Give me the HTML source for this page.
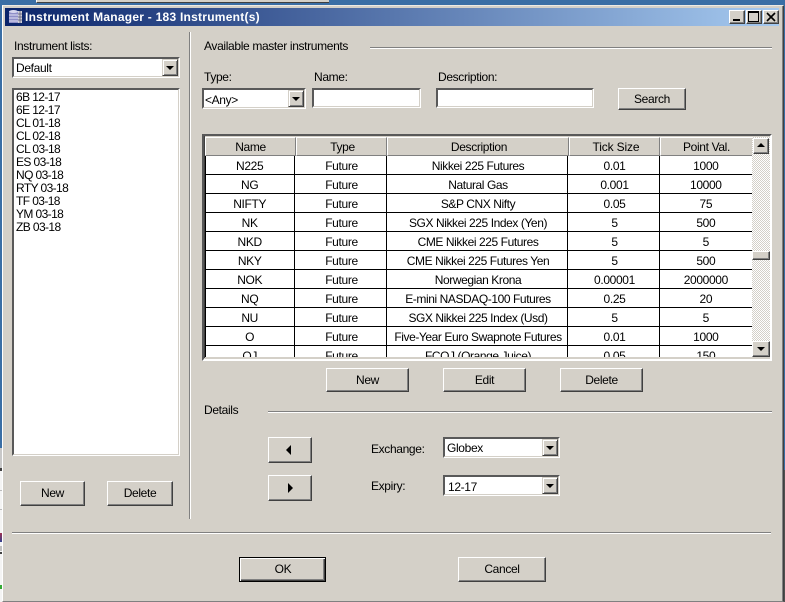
<!DOCTYPE html>
<html><head><meta charset="utf-8"><style>
html,body{margin:0;padding:0}
body{width:785px;height:602px;overflow:hidden;position:relative;background:#3a6ea5;font:12px "Liberation Sans",sans-serif;color:#000;letter-spacing:-.35px}
div{position:absolute;box-sizing:border-box}
.t{white-space:nowrap;line-height:14px;height:14px}
.b{border:1px solid;border-color:#fff #404040 #404040 #fff;box-shadow:inset -1px -1px #808080;background:#d4d0c8;text-align:center}
.f{border:2px solid;border-color:#595959 #fff #fff #595959;background:#fff}
.f:after{content:"";position:absolute;left:-1px;top:-1px;right:-1px;bottom:-1px;border:1px solid;border-color:transparent #d4d0c8 #d4d0c8 transparent}
.d{position:absolute;top:0;right:0;bottom:0;width:16px;border:1px solid;border-color:#d4d0c8 #404040 #404040 #d4d0c8;box-shadow:inset 1px 1px #fff,inset -1px -1px #808080;background:#d4d0c8;z-index:2}
.d:after{content:"";position:absolute;left:3px;top:6px;border:4px solid transparent;border-top:4px solid #000;border-bottom:0}
.hl{height:2px;background:linear-gradient(#808080 50%,#fff 50%)}
.r{left:0;width:547px;height:19px;border-bottom:1px solid #000;display:flex;line-height:20px;text-align:center;background:#fff}
.r span{display:block;height:18px;white-space:nowrap;overflow:hidden}
.r span:nth-child(1){width:90px;border-right:1px solid #000}
.r span:nth-child(2){width:91px;border-right:1px solid #000;text-indent:2px}
.r span:nth-child(3){width:182px;border-right:1px solid #000;text-indent:2px;letter-spacing:-.42px}
.r span:nth-child(4){width:91px;border-right:1px solid #000;text-indent:2px}
.r span:nth-child(5){width:93px}
.h{top:0;height:19px;background:#d4d0c8;border-top:1px solid #fff;border-left:1px solid #fff;border-right:1px solid #808080;border-bottom:1px solid #808080;text-align:center;line-height:19px}
.sb{width:16px;left:753px;border:1px solid;border-color:#fff #404040 #404040 #fff;box-shadow:inset -1px -1px #808080;background:#d4d0c8}
</style></head><body>
<!-- background bits -->
<div style="left:36px;top:0;width:293px;height:3px;background:#d4d0c8;border-bottom:1px solid #404040;border-left:1px solid #fff"></div>
<div style="left:0;top:448px;width:3px;height:154px;background:#f4f4f4"></div>
<div style="left:0;top:448px;width:3px;height:20px;background:#c8c8c8"></div>
<div style="left:0;top:468px;width:3px;height:3px;background:#404040"></div>
<div style="left:0;top:490px;width:3px;height:1px;background:#bbb"></div>
<div style="left:0;top:509px;width:3px;height:1px;background:#bbb"></div>
<div style="left:0;top:533px;width:3px;height:9px;background:linear-gradient(#a03050,#304090)"></div>
<div style="left:0;top:546px;width:3px;height:5px;background:#c0c0c0"></div>
<div style="left:0;top:552px;width:3px;height:2px;background:#404040"></div>
<div style="left:0;top:585px;width:3px;height:4px;background:#3a3"></div>
<div style="left:783px;top:470px;width:2px;height:132px;background:#505050"></div>
<!-- window -->
<div style="left:2px;top:5px;width:782px;height:597px;background:#d4d0c8;border:1px solid;border-color:#eeebe4 #404040 #808080 #fff;box-shadow:inset -1px 0 #808080"></div>
<!-- title bar -->
<div style="left:5px;top:8px;width:774px;height:18px;background:linear-gradient(90deg,#0a246a,#a6caf0)"></div>
<svg style="position:absolute;left:8px;top:9px" width="15" height="16" viewBox="0 0 15 16"><rect x="1" y="2" width="9" height="12" fill="#8f8fc8"/><ellipse cx="5.5" cy="2.5" rx="4.5" ry="1.5" fill="#d8d8f0"/><path d="M1 6h9M1 9h9M1 12h9" stroke="#e0e0f4"/><rect x="10" y="2" width="4" height="12" fill="#d0d0d8"/><path d="M10 5h4M10 8h4M10 11h4M12 2v12" stroke="#505070" stroke-width=".7"/></svg>
<div class="t" style="left:25px;top:10px;color:#fff;font-weight:bold;font-size:12px;letter-spacing:.25px">Instrument Manager - 183 Instrument(s)</div>
<div class="b" style="left:729px;top:10px;width:16px;height:14px"><div style="left:3px;top:8px;width:7px;height:2px;background:#000"></div></div>
<div class="b" style="left:746px;top:10px;width:16px;height:14px"><div style="left:1px;top:0;width:11px;height:11px;border:1px solid #000;border-top-width:2px"></div></div>
<div class="b" style="left:763px;top:10px;width:16px;height:14px"><svg style="position:absolute;left:2px;top:1px" width="10" height="10" viewBox="0 0 10 10"><path d="M1 1l8 8M9 1l-8 8" stroke="#000" stroke-width="1.6"/></svg></div>
<!-- left panel -->
<div class="t" style="left:14px;top:39px">Instrument lists:</div>
<div class="f" style="left:12px;top:57px;width:168px;height:21px"><div class="t" style="left:2px;top:2px">Default</div><div class="d"></div></div>
<div class="f" style="left:12px;top:88px;width:168px;height:368px">
<div class="t" style="left:2px;top:1px;line-height:13px;height:auto;letter-spacing:-.6px">6B 12-17<br>6E 12-17<br>CL 01-18<br>CL 02-18<br>CL 03-18<br>ES 03-18<br>NQ 03-18<br>RTY 03-18<br>TF 03-18<br>YM 03-18<br>ZB 03-18</div></div>
<div class="b" style="left:20px;top:481px;width:65px;height:25px;line-height:23px">New</div>
<div class="b" style="left:107px;top:481px;width:66px;height:25px;line-height:23px">Delete</div>
<div style="left:189px;top:32px;width:2px;height:487px;background:linear-gradient(90deg,#808080 50%,#fff 50%)"></div>
<!-- right panel -->
<div class="t" style="left:204px;top:39px">Available master instruments</div>
<div class="hl" style="left:370px;top:47px;width:402px"></div>
<div class="t" style="left:204px;top:70px">Type:</div>
<div class="t" style="left:314px;top:70px">Name:</div>
<div class="t" style="left:438px;top:70px">Description:</div>
<div class="f" style="left:202px;top:88px;width:104px;height:21px"><div class="t" style="left:1px;top:3px">&lt;Any&gt;</div><div class="d"></div></div>
<div class="f" style="left:312px;top:88px;width:109px;height:20px"></div>
<div class="f" style="left:436px;top:88px;width:158px;height:20px"></div>
<div class="b" style="left:618px;top:88px;width:68px;height:22px;line-height:20px">Search</div>
<!-- table -->
<div style="left:202px;top:134px;width:570px;height:227px;border:2px solid;border-color:#595959 #fff #fff #595959;background:#d4d0c8"></div>
<div style="left:204px;top:136px;width:1px;height:222px;background:#404040"></div>
<div style="left:205px;top:137px;width:547px;height:220px;overflow:hidden;background:#fff">
<div style="left:0;top:19px;width:1px;height:201px;background:#000;z-index:3"></div>
<div class="h" style="left:0;width:91px">Name</div>
<div class="h" style="left:91px;width:91px;text-indent:2px">Type</div>
<div class="h" style="left:182px;width:182px;text-indent:2px">Description</div>
<div class="h" style="left:364px;width:91px;text-indent:3px;letter-spacing:-.15px">Tick Size</div>
<div class="h" style="left:455px;width:93px">Point Val.</div>
<div class="r" style="top:19px"><span>N225</span><span>Future</span><span>Nikkei 225 Futures</span><span>0.01</span><span>1000</span></div>
<div class="r" style="top:38px"><span>NG</span><span>Future</span><span>Natural Gas</span><span>0.001</span><span>10000</span></div>
<div class="r" style="top:57px"><span>NIFTY</span><span>Future</span><span>S&amp;P CNX Nifty</span><span>0.05</span><span>75</span></div>
<div class="r" style="top:76px"><span>NK</span><span>Future</span><span>SGX Nikkei 225 Index (Yen)</span><span>5</span><span>500</span></div>
<div class="r" style="top:95px"><span>NKD</span><span>Future</span><span>CME Nikkei 225 Futures</span><span>5</span><span>5</span></div>
<div class="r" style="top:114px"><span>NKY</span><span>Future</span><span>CME Nikkei 225 Futures Yen</span><span>5</span><span>500</span></div>
<div class="r" style="top:133px"><span>NOK</span><span>Future</span><span>Norwegian Krona</span><span>0.00001</span><span>2000000</span></div>
<div class="r" style="top:152px"><span>NQ</span><span>Future</span><span>E-mini NASDAQ-100 Futures</span><span>0.25</span><span>20</span></div>
<div class="r" style="top:171px"><span>NU</span><span>Future</span><span>SGX Nikkei 225 Index (Usd)</span><span>5</span><span>5</span></div>
<div class="r" style="top:190px"><span>O</span><span>Future</span><span>Five-Year Euro Swapnote Futures</span><span>0.01</span><span>1000</span></div>
<div class="r" style="top:209px"><span>OJ</span><span>Future</span><span>FCOJ (Orange Juice)</span><span>0.05</span><span>150</span></div>
</div>
<!-- scrollbar -->
<div style="left:752px;top:137px;width:18px;height:220px;background:repeating-conic-gradient(#d4d0c8 0 25%,#fff 0 50%) 0 0/2px 2px"></div>
<div class="sb" style="left:753px;top:138px;height:16px"><div style="left:3px;top:4px;border:4px solid transparent;border-bottom:4px solid #000;border-top:0"></div></div>
<div class="sb" style="left:752px;top:251px;width:18px;height:9px"></div>
<div class="sb" style="left:752px;top:341px;width:18px;height:16px;"><div style="left:4px;top:5px;border:4px solid transparent;border-top:4px solid #000;border-bottom:0"></div></div>
<!-- table buttons -->
<div class="b" style="left:326px;top:368px;width:83px;height:24px;line-height:22px">New</div>
<div class="b" style="left:443px;top:368px;width:83px;height:24px;line-height:22px">Edit</div>
<div class="b" style="left:560px;top:368px;width:83px;height:24px;line-height:22px">Delete</div>
<!-- details -->
<div class="t" style="left:204px;top:403px">Details</div>
<div class="hl" style="left:268px;top:411px;width:504px"></div>
<div class="b" style="left:268px;top:437px;width:44px;height:26px"><div style="left:17px;top:7px;border:5px solid transparent;border-right:5px solid #000;border-left:0"></div></div>
<div class="b" style="left:268px;top:475px;width:44px;height:26px"><div style="left:19px;top:7px;border:5px solid transparent;border-left:5px solid #000;border-right:0"></div></div>
<div class="t" style="left:371px;top:442px">Exchange:</div>
<div class="t" style="left:371px;top:479px">Expiry:</div>
<div class="f" style="left:443px;top:437px;width:117px;height:21px"><div class="t" style="left:2px;top:2px">Globex</div><div class="d"></div></div>
<div class="f" style="left:443px;top:475px;width:117px;height:21px"><div class="t" style="left:3px;top:3px">12-17</div><div class="d"></div></div>
<!-- bottom -->
<div class="hl" style="left:12px;top:532px;width:759px"></div>
<div class="b" style="left:239px;top:557px;width:87px;height:25px;line-height:23px;padding-left:1px;border:1px solid #000;box-shadow:inset 1px 1px #fff,inset -1px -1px #404040,inset -2px -2px #808080">OK</div>
<div class="b" style="left:458px;top:557px;width:88px;height:25px;line-height:23px">Cancel</div>
</body></html>
